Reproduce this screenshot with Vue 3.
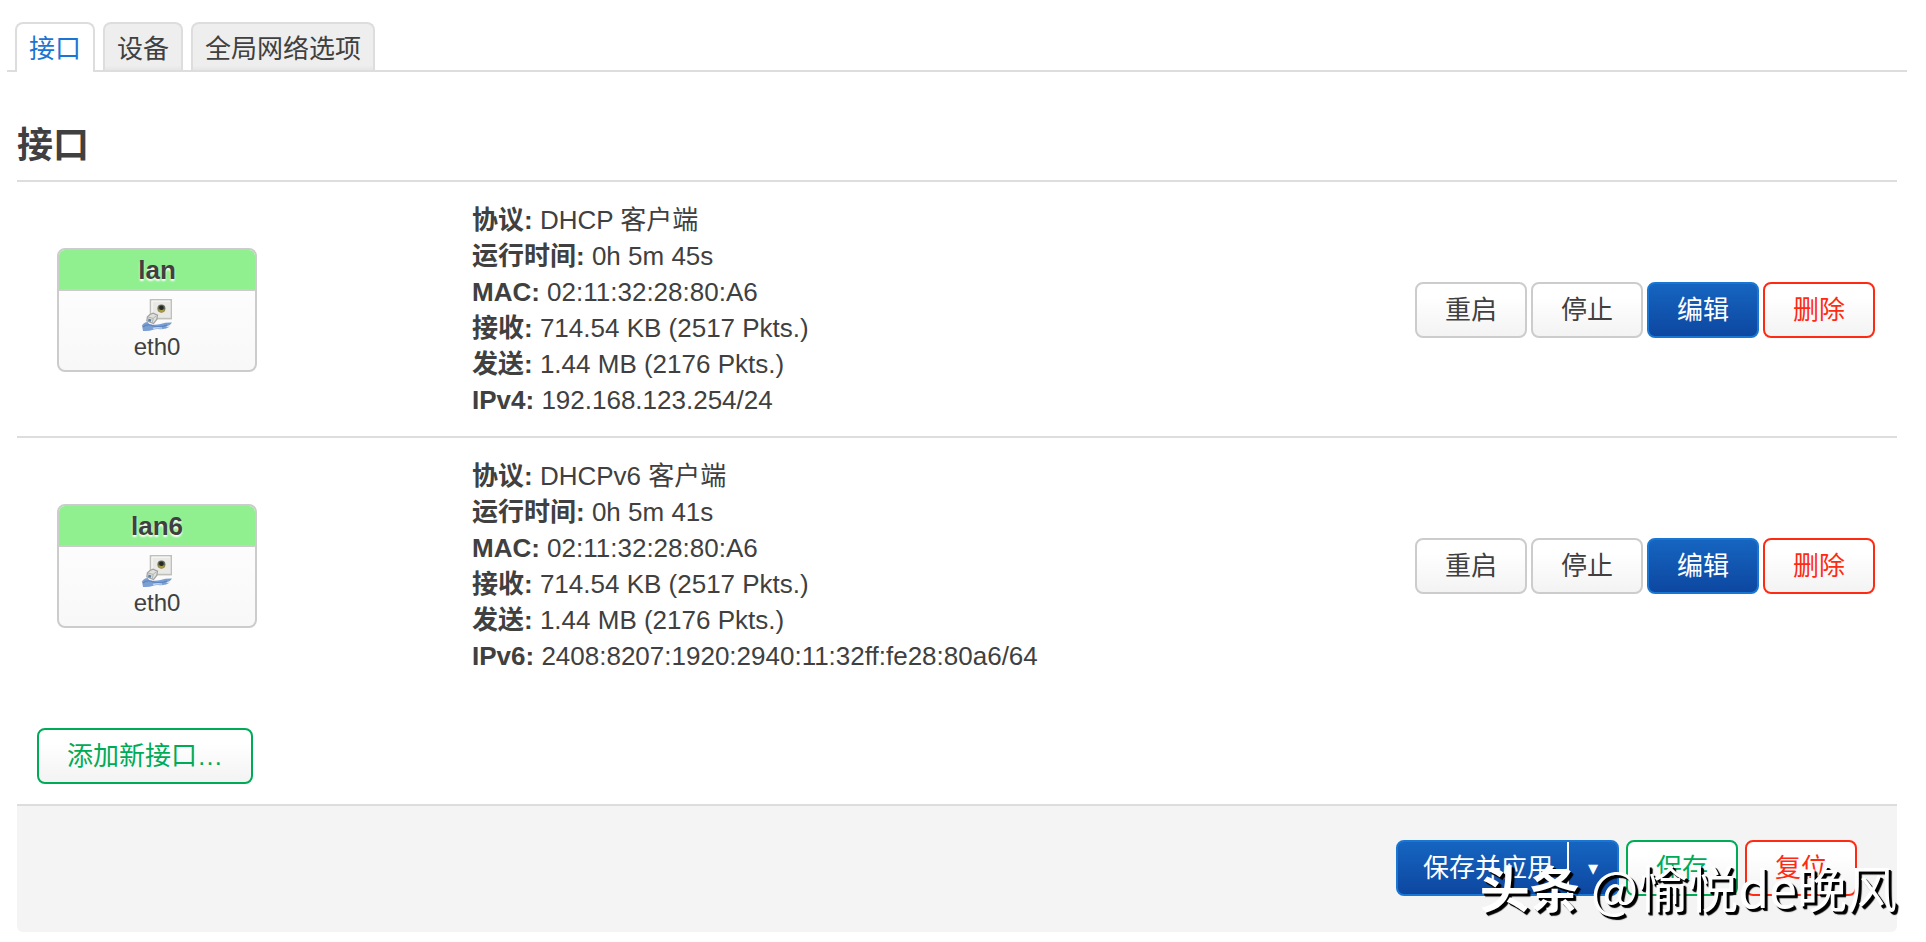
<script setup>
import { ref } from 'vue'

const tabs = ['接口', '设备', '全局网络选项']
const active = ref(0)

const interfaces = [
  {
    name: 'lan',
    device: 'eth0',
    details: [
      ['协议', 'DHCP 客户端'],
      ['运行时间', '0h 5m 45s'],
      ['MAC', '02:11:32:28:80:A6'],
      ['接收', '714.54 KB (2517 Pkts.)'],
      ['发送', '1.44 MB (2176 Pkts.)'],
      ['IPv4', '192.168.123.254/24'],
    ],
  },
  {
    name: 'lan6',
    device: 'eth0',
    details: [
      ['协议', 'DHCPv6 客户端'],
      ['运行时间', '0h 5m 41s'],
      ['MAC', '02:11:32:28:80:A6'],
      ['接收', '714.54 KB (2517 Pkts.)'],
      ['发送', '1.44 MB (2176 Pkts.)'],
      ['IPv6', '2408:8207:1920:2940:11:32ff:fe28:80a6/64'],
    ],
  },
]
</script>

<template>
  <div class="page">
    <nav class="tabs">
      <a
        v-for="(tab, i) in tabs"
        :key="tab"
        href="#"
        class="tab"
        :class="{ active: active === i }"
        @click.prevent="active = i"
      >{{ tab }}</a>
    </nav>

    <main class="content">
      <h3 class="title">接口</h3>

      <table class="interfaces">
        <colgroup>
          <col class="col-box" />
          <col />
          <col class="col-actions" />
        </colgroup>
        <tbody>
          <tr v-for="iface in interfaces" :key="iface.name">
            <td class="box-cell">
              <div class="ifacebox">
                <div class="ifacebox-head">{{ iface.name }}</div>
                <div class="ifacebox-body">
                  <svg class="port" viewBox="0 0 30 32" aria-hidden="true">
                    <rect x="8.5" y="0.8" width="21" height="18.800" fill="#e9e9e5" stroke="#bfbfbc" stroke-width="1.600" />
                    <path d="M10 18V2.2h18" fill="none" stroke="#f8f8f6" stroke-width="1.200" />
                    <circle cx="19.400" cy="9.400" r="4" fill="#6d6c5c" />
                    <path d="M16 10.500h7q-.6 2.900-3.500 2.900T16 10.500z" fill="#a89a3c" />
                    <circle cx="19.400" cy="8.700" r="2.300" fill="#262a26" />
                    <path d="M0 26.500q2-3.500 5.500-3.500l2 2.200q6 1.200 11-.2 6-1.800 11.500-1.400-1.500 3-6 3.600 2 .8 4 .4-4 3-10 2.600-4-.6-7.500.8-4 1.200-9.500 1z" fill="#7a9fd2" />
                    <path d="M1 28q4-3.500 10-1.200t14-.6" fill="none" stroke="#5d86c2" stroke-width="1.400" />
                    <path d="M11 29.500q4-1.200 9-.4" fill="none" stroke="#c0d2ec" stroke-width="1.400" />
                    <path d="M8 15.500l3-1.300 4.500 2-.6 4-3.400 4.400-6.700-2.800.6-4z" fill="#e0e0de" stroke="#a2a29f" stroke-width="1.200" />
                    <path d="M6 18l5.200 1.400-.8 4M11.200 19.400l3.200-2.600" fill="none" stroke="#b0b0ae" />
                    <path d="M6.400 19.600l3 .8-.6 2.400-2.600-.8z" fill="#5d7fa6" />
                  </svg>
                  <span>{{ iface.device }}</span>
                </div>
              </div>
            </td>
            <td class="details">
              <div v-for="[label, value] in iface.details" :key="label">
                <strong>{{ label }}:</strong> {{ value }}
              </div>
            </td>
            <td>
              <div class="actions">
                <button type="button" class="btn">重启</button>
                <button type="button" class="btn">停止</button>
                <button type="button" class="btn primary">编辑</button>
                <button type="button" class="btn danger">删除</button>
              </div>
            </td>
          </tr>
        </tbody>
      </table>

      <div class="create">
        <button type="button" class="btn success">添加新接口…</button>
      </div>

      <footer class="page-actions">
        <div class="split">
          <button type="button" class="split-main">保存并应用</button>
          <button type="button" class="split-toggle" aria-label="更多">▾</button>
        </div>
        <button type="button" class="btn success">保存</button>
        <button type="button" class="btn danger">复位</button>
        <div class="watermark"><b>头条</b> @愉悦de晚风</div>
      </footer>
    </main>
  </div>
</template>

<style>
body {
  margin: 0;
  background: #fff;
}
</style>

<style scoped>
.page {
  padding: 22px 19px 10px 7px;
  color: #404040;
  font: 26px/36px "Liberation Sans", "Noto Sans CJK SC", sans-serif;
}

.tabs {
  display: flex;
  gap: 8px;
  padding: 0 8px;
  border-bottom: 2px solid #ddd;
}

.tab {
  box-sizing: border-box;
  height: 48px;
  padding: 0 12px;
  border: 2px solid #ddd;
  border-bottom: 0;
  border-radius: 8px 8px 0 0;
  background: linear-gradient(#eee 90%, #e6e6e6);
  color: #404040;
  line-height: 50px;
  text-decoration: none;
}

.tab.active {
  height: 50px;
  margin-bottom: -2px;
  background: #fff;
  color: #1976d2;
}

.content {
  margin: 0 10px;
}

.title {
  margin: 0;
  padding: 40px 0 0;
  border-bottom: 2px solid #ddd;
  font-size: 36px;
  line-height: 68px;
}

.interfaces {
  width: 100%;
  border-collapse: separate;
  border-spacing: 0;
  table-layout: fixed;
}

.col-box {
  width: 437px;
}

.col-actions {
  width: 500px;
}

.interfaces td {
  padding: 20px 18px 18px;
  vertical-align: middle;
}

.interfaces tr + tr td {
  border-top: 2px solid #ddd;
}

.interfaces .box-cell {
  padding-left: 40px;
}

.ifacebox {
  box-sizing: border-box;
  width: 200px;
  overflow: hidden;
  border: 2px solid #ccc;
  border-radius: 8px;
  background: linear-gradient(#fff, #f8f8f8);
  text-align: center;
}

.ifacebox-head {
  padding: 2px 0 1px;
  border-bottom: 2px solid #ccc;
  background: #90f090;
  font-weight: bold;
  text-shadow: 0 2px 2px #fff;
}

.ifacebox-body {
  display: flex;
  flex-direction: column;
  align-items: center;
  padding: 8px 0 7px;
  font-size: 24px;
  line-height: 32px;
}

.port {
  display: block;
  width: 30px;
  height: 32px;
}

.actions {
  display: flex;
  justify-content: flex-end;
  gap: 4px;
  padding-right: 4px;
}

.btn {
  padding: 8px 28px;
  border: 2px solid #ccc;
  border-radius: 8px;
  background: linear-gradient(#fff 25%, #f3f3f3);
  color: #404040;
  font: inherit;
  white-space: nowrap;
  cursor: pointer;
}

.btn.primary {
  border-color: #1976d2;
  background: linear-gradient(#1565c0, #0d47a1);
  color: #fff;
}

.btn.danger {
  border-color: #ff2a12;
  color: #ff2a12;
}

.btn.success {
  border-color: #00ab57;
  color: #00ab57;
}

.create {
  padding: 36px 20px 20px;
}

.page-actions {
  position: relative;
  display: flex;
  justify-content: flex-end;
  gap: 7px;
  padding: 34px 40px 36px;
  border-top: 2px solid #ddd;
  border-radius: 0 0 6px 6px;
  background: #f4f4f4;
}

.split {
  display: flex;
  border: 2px solid #1976d2;
  border-radius: 8px;
  background: linear-gradient(#1565c0, #0d47a1);
}

.split button {
  border: 0;
  background: none;
  color: #fff;
  font: inherit;
  cursor: pointer;
}

.split-main {
  padding: 8px 14px 8px 25px;
}

.split .split-toggle {
  width: 50px;
  padding: 8px 0;
  border-left: 2px solid #fff;
  font-family: "DejaVu Sans", sans-serif;
  font-size: 20px;
}

.watermark {
  position: absolute;
  right: 0;
  bottom: 14px;
  color: #fff;
  font-family: "Noto Sans CJK SC", sans-serif;
  font-size: 50px;
  line-height: 64px;
  text-shadow: 2px 2px 0 #000, 3px 3px 1px #000;
  white-space: nowrap;
  pointer-events: none;
}
</style>
